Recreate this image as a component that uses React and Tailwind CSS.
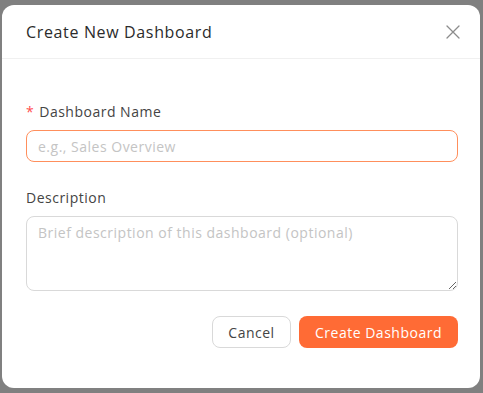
import React from "react";

export default function App() {
  return (
    <div className="w-[483px] h-[393px] bg-[#808080] pt-[5px] pl-[2px] overflow-hidden" style={{ fontFamily: '"Open Sans", "Noto Sans", sans-serif' }}>
      <div className="w-[478px] h-[383px] bg-white rounded-[12px] flex flex-col">
        <div className="h-[54px] pl-6 pr-[22px] flex items-center justify-between border-b border-[#f0f0f0]">
          <h2 className="text-[16px] text-[#2b2b2b] font-normal tracking-[0.65px]">Create New Dashboard</h2>
          <button className="w-[20px] h-[20px] flex items-center justify-center mr-[-5px]">
            <svg width="14" height="14" viewBox="0 0 14 14" fill="none" stroke="#8c8c8c" strokeWidth="1.3" strokeLinecap="round">
              <path d="M1 1L13 13M13 1L1 13" />
            </svg>
          </button>
        </div>
        <div className="pl-6 pr-[22px] pt-[41px] flex flex-col tracking-[0.5px]">
          <label className="h-[22px] flex items-center text-[14px] text-[#444]">
            <span className="text-[#ff4d4f] mr-[5px] text-[14px]">*</span>
            Dashboard Name
          </label>
          <input
            autoFocus
            placeholder="e.g., Sales Overview"
            className="mt-[8px] h-[32px] w-full rounded-[8px] border border-[#ff8f5c] px-[11px] text-[14px] tracking-[0.5px] text-[#333] placeholder:text-[#c4c4c4] outline-none"
          />
          <label className="mt-[24px] h-[22px] flex items-center text-[14px] text-[#444]">Description</label>
          <textarea
            placeholder="Brief description of this dashboard (optional)"
            className="mt-[8px] h-[75px] w-full rounded-[8px] border border-[#d9d9d9] px-[11px] py-[5px] text-[14px] tracking-[0.5px] leading-[22px] text-[#333] placeholder:text-[#c4c4c4] outline-none resize-y"
          />
          <div className="mt-[25px] flex justify-end gap-[8px]">
            <button className="h-[32px] w-[79px] rounded-[8px] border border-[#d9d9d9] bg-white text-[14px] tracking-[0.5px] text-[#444]">Cancel</button>
            <button className="h-[32px] w-[159px] rounded-[8px] bg-[#ff6b35] text-[14px] tracking-[0.5px] text-white">Create Dashboard</button>
          </div>
        </div>
      </div>
    </div>
  );
}
